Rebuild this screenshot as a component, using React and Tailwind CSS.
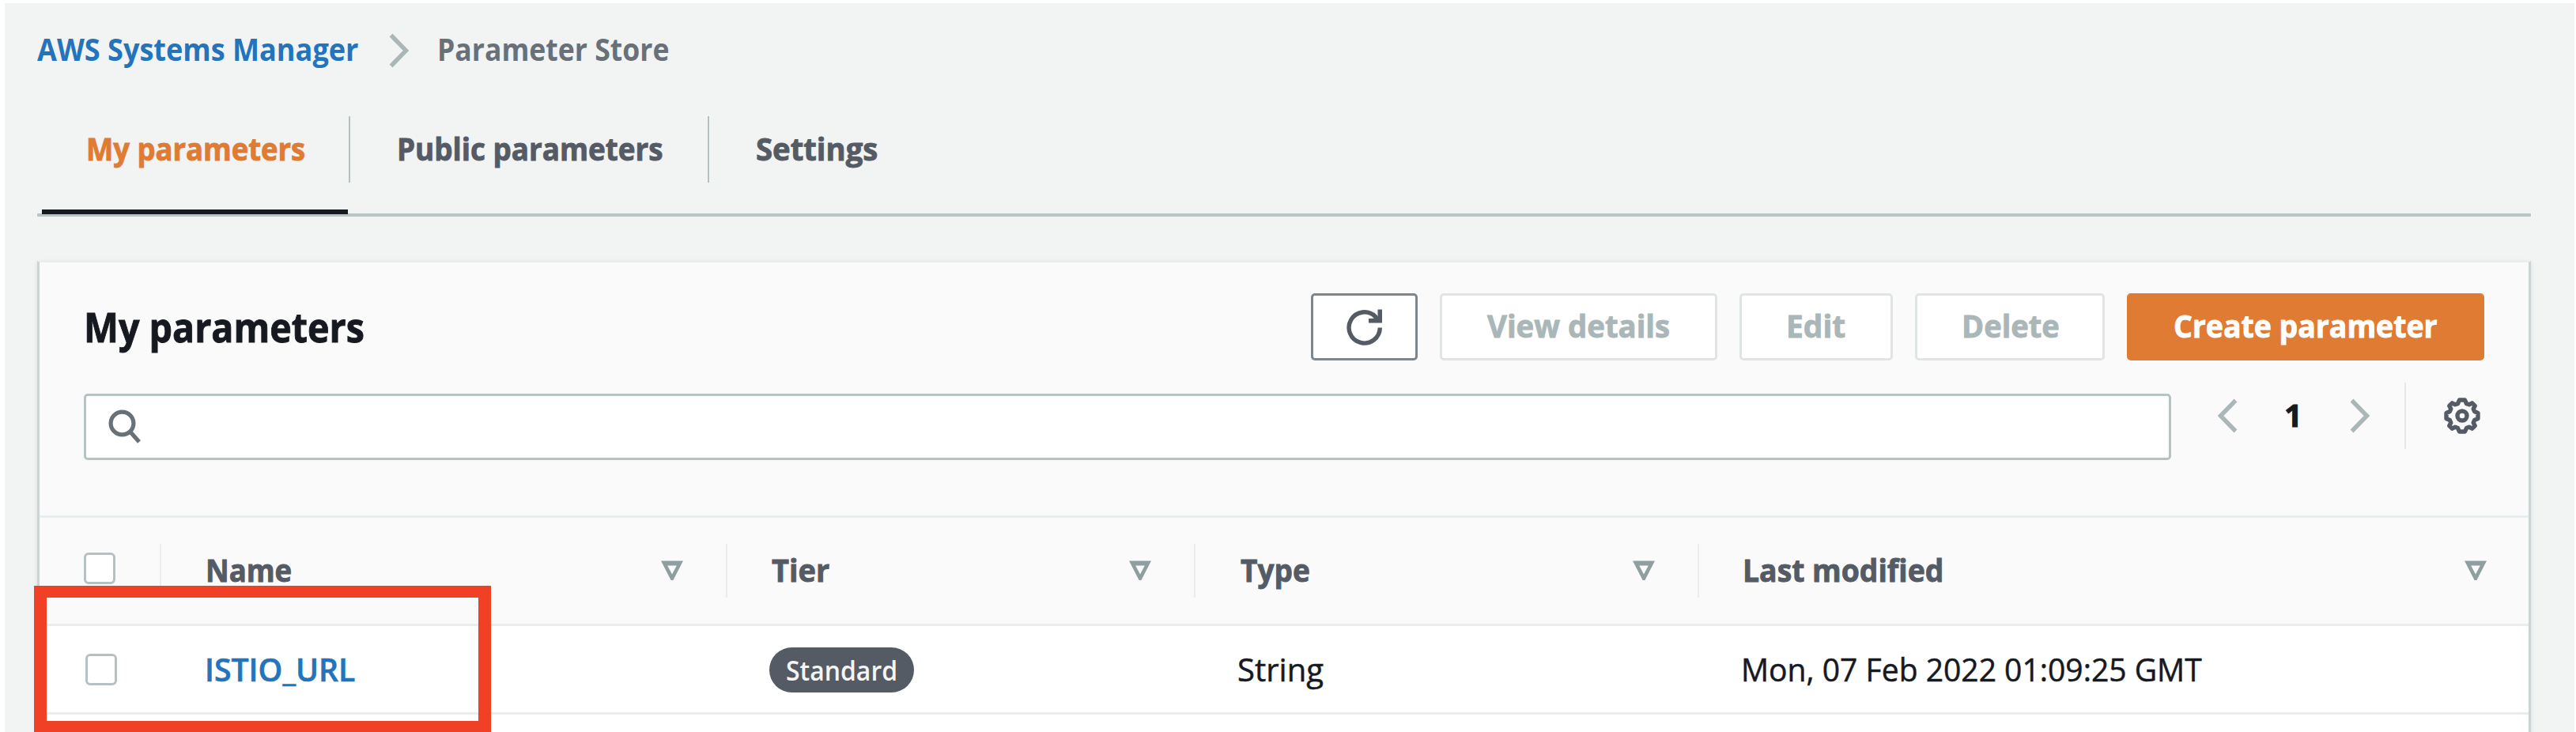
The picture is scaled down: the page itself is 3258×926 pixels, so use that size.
const SEP = 'h-[68px] w-[2px] shrink-0 bg-[#eaeded]';

function Label({ className = '', children }) {
  return (
    <span className={`block origin-left whitespace-nowrap text-[40px] leading-[40px] ${className}`}>
      {children}
    </span>
  );
}

function Chevron({ flip = false, className = '' }) {
  return (
    <svg
      viewBox="0 0 26 44"
      className={`h-[44px] w-[26px] shrink-0 ${flip ? '-scale-x-100' : ''} ${className}`}
      fill="none"
      stroke="#aab7b8"
      strokeWidth="5.4"
    >
      <path d="M2.5 2.5 L21.5 22 L2.5 41.5" />
    </svg>
  );
}

function RefreshIcon() {
  return (
    <svg viewBox="0 0 46 46" className="h-[46px] w-[46px]" fill="none">
      <path d="M42.3 23.5 A19.6 19.6 0 1 1 36.5 9.5 L40 14" stroke="#545b64" strokeWidth="5.4" />
      <path d="M39.5 .5 H45 V17.5 H28 V12 L39.5 11.5 Z" fill="#545b64" />
    </svg>
  );
}

function SearchIcon() {
  return (
    <svg viewBox="0 0 42 44" className="h-[44px] w-[42px]" fill="none" stroke="#687078" strokeWidth="5.2">
      <circle cx="17.5" cy="17.5" r="14.4" />
      <path d="M27.5 28 L39 41" />
    </svg>
  );
}

function GearIcon() {
  return (
    <svg viewBox="0 0 46 46" className="h-[46px] w-[46px]" fill="none" stroke="#545b64" strokeWidth="5.4">
      <path
        strokeLinejoin="round"
        d="M19.5 3 H26.5 L28.5 7.6 L31.8 8.8 L35.6 6.8 L39.2 10.4 L37.2 14.2 L38.6 17.5 L43 19.5 V26.5 L38.6 28.5 L37.2 31.8 L39.2 35.6 L35.6 39.2 L31.8 37.2 L28.5 38.6 L26.5 43 H19.5 L17.5 38.6 L14.2 37.2 L10.4 39.2 L6.8 35.6 L8.8 31.8 L7.4 28.5 L3 26.5 V19.5 L7.4 17.5 L8.8 14.2 L6.8 10.4 L10.4 6.8 L14.2 8.8 L17.5 7.6 Z"
      />
      <circle cx="23" cy="23" r="6" />
    </svg>
  );
}

function SortIcon({ className = '' }) {
  return (
    <svg viewBox="0 0 30 26" className={`h-[26px] w-[30px] shrink-0 ${className}`}>
      <path
        fill="#8f9e9f"
        fillRule="evenodd"
        d="M1 .5 H29 L16.4 25 H13.6 Z M9.2 6.6 L15 17.4 L20.8 6.6 Z"
      />
    </svg>
  );
}

function Checkbox({ className = '' }) {
  return (
    <span
      role="checkbox"
      aria-checked="false"
      className={`block size-[40px] rounded-[6px] border-[3px] border-[#b6c1c4] bg-white ${className}`}
    />
  );
}

function Button({ className = '', children }) {
  return (
    <button
      type="button"
      className={`flex h-[85px] items-center rounded-[5px] border-[3px] font-bold ${className}`}
    >
      {children}
    </button>
  );
}

const DISABLED = 'border-[#dfe4e4] bg-white text-[#aab7b8]';
const HEAVY = '[-webkit-text-stroke:0.9px_currentColor]';

export default function App() {
  return (
    <div className="relative h-[926px] w-[3258px] overflow-hidden bg-white pt-1 pr-[2px] pl-[6px] font-['Open_Sans',sans-serif]">
      <div className="h-[922px] bg-[#f2f3f3] pr-[55px] pl-[41px]">
        <nav className="flex h-[118px] items-start pt-[38px] font-bold">
          <Label className="w-[445px] scale-x-[.902] text-[#2474bb]">AWS Systems Manager</Label>
          <Chevron />
          <Label className="ml-[35px] scale-x-[.889] text-[#687078]">Parameter Store</Label>
        </nav>

        <div className={`flex h-[152px] border-b-[4px] border-[#bac5c8] font-bold text-[#545b64] ${HEAVY}`}>
          <div className="ml-[6px] flex h-[149px] w-[387px] border-b-[6px] border-[#16191f] pt-[46px] pl-[56px]">
            <Label className="scale-x-[.91] text-[#e07b33]">My parameters</Label>
          </div>
          <div className="mt-[25px] ml-[1px] h-[84px] w-[2px] bg-[#b4c0c2]" />
          <div className="flex w-[452px] pt-[46px] pl-[59px]">
            <Label className="scale-x-[.92]">Public parameters</Label>
          </div>
          <div className="mt-[25px] h-[84px] w-[2px] bg-[#b4c0c2]" />
          <div className="flex pt-[46px] pl-[59px]">
            <Label className="scale-x-[.956]">Settings</Label>
          </div>
        </div>

        <section className="mt-[56px] h-[600px] border-x-[3px] border-t-2 border-x-[#ccd4d6] border-t-[#eaeded] bg-white shadow-[0_2px_6px_rgba(0,28,36,0.1)]">
          <div className="h-[320px] bg-[#fafafa] pt-[39px] pr-[56px] pl-[56px]">
            <div className="flex h-[85px] items-start justify-between">
              <h2 className="pt-[16px]">
                <span
                  className={`block origin-left scale-x-[.905] text-[51.5px] leading-[52px] font-bold whitespace-nowrap text-[#16191f] ${HEAVY}`}
                >
                  My parameters
                </span>
              </h2>
              <div className={`flex gap-[28px] ${HEAVY}`}>
                <Button className="w-[135px] justify-center border-[#7d858d] bg-white">
                  <RefreshIcon />
                </Button>
                <Button className={`w-[351px] pl-[57px] ${DISABLED}`}>
                  <Label className="mb-[3px] scale-x-[.958]">View details</Label>
                </Button>
                <Button className={`w-[194px] pl-[56px] ${DISABLED}`}>
                  <Label className="mb-[3px] scale-x-[.973]">Edit</Label>
                </Button>
                <Button className={`w-[240px] pl-[56px] ${DISABLED}`}>
                  <Label className="mb-[3px] scale-x-[.952]">Delete</Label>
                </Button>
                <Button className="w-[452px] border-[#e07b33] bg-[#e07b33] pl-[56px] text-white">
                  <Label className="mb-[3px] scale-x-[.935]">Create parameter</Label>
                </Button>
              </div>
            </div>

            <div className="mt-[28px] flex items-start">
              <div className="mt-[14px] flex h-[84px] w-[2640px] items-center rounded-[5px] border-[3px] border-[#b7c2c3] bg-white pl-[28px]">
                <SearchIcon />
              </div>
              <div className="ml-[58px] flex h-[84px] items-center">
                <Chevron flip />
                <Label className={`ml-[59px] mb-[2px] w-[83px] font-bold text-[#16191f] ${HEAVY}`}>1</Label>
                <Chevron />
                <div className="ml-[43px] h-[84px] w-[2px] bg-[#e3e8e8]" />
                <div className="ml-[48px]">
                  <GearIcon />
                </div>
              </div>
            </div>
          </div>

          <div
            className={`grid h-[140px] grid-cols-[154px_716px_592px_637px_1049px] border-y-[3px] border-[#eaeded] bg-[#fafafa] font-bold text-[#545b64] ${HEAVY}`}
          >
            <div className="flex items-center justify-between pl-[56px]">
              <Checkbox className="mb-[6px]" />
              <div className={SEP} />
            </div>
            <div className="flex items-center pl-[56px]">
              <Label className="mb-[2px] w-[575px] scale-x-[.913]">Name</Label>
              <SortIcon />
              <div className={`ml-auto ${SEP}`} />
            </div>
            <div className="flex items-center pl-[56px]">
              <Label className="mb-[2px] w-[451px] scale-x-[.948]">Tier</Label>
              <SortIcon />
              <div className={`ml-auto ${SEP}`} />
            </div>
            <div className="flex items-center pl-[57px]">
              <Label className="mb-[2px] w-[495px] scale-x-[.925]">Type</Label>
              <SortIcon />
              <div className={`ml-auto ${SEP}`} />
            </div>
            <div className="flex items-center pl-[55px]">
              <Label className="mb-[2px] scale-x-[.933]">Last modified</Label>
              <SortIcon className="mr-[52px] ml-auto" />
            </div>
          </div>

          <div className="grid h-[112px] grid-cols-[154px_716px_592px_637px_1049px] border-b-[3px] border-[#eaeded] bg-white text-[#16191f]">
            <div className="flex items-center pl-[58px]">
              <Checkbox />
            </div>
            <div className="flex items-center pl-[55px]">
              <Label className="mt-px scale-x-[.979] font-semibold text-[#2474bb] [-webkit-text-stroke:0.6px_currentColor]">
                ISTIO_URL
              </Label>
            </div>
            <div className="flex items-center pl-[53px]">
              <span className="mt-[2px] flex h-[57px] w-[183px] items-center rounded-full bg-[#545b64] pl-[21px]">
                <span className="mt-px block origin-left scale-x-[.939] text-[34px] leading-[40px] font-semibold whitespace-nowrap text-[#f4f5f5]">
                  Standard
                </span>
              </span>
            </div>
            <div className="flex items-center pl-[53px] [-webkit-text-stroke:0.5px_currentColor]">
              <Label className="mt-px">String</Label>
            </div>
            <div className="flex items-center pl-[53px] [-webkit-text-stroke:0.5px_currentColor]">
              <Label className="mt-px scale-x-[.976]">Mon, 07 Feb 2022 01:09:25 GMT</Label>
            </div>
          </div>
        </section>
      </div>

      <div className="absolute top-[741px] left-[43px] h-[185px] w-[578px] border-x-[16px] border-t-[15px] border-b-[14px] border-[#f04126]" />
    </div>
  );
}
